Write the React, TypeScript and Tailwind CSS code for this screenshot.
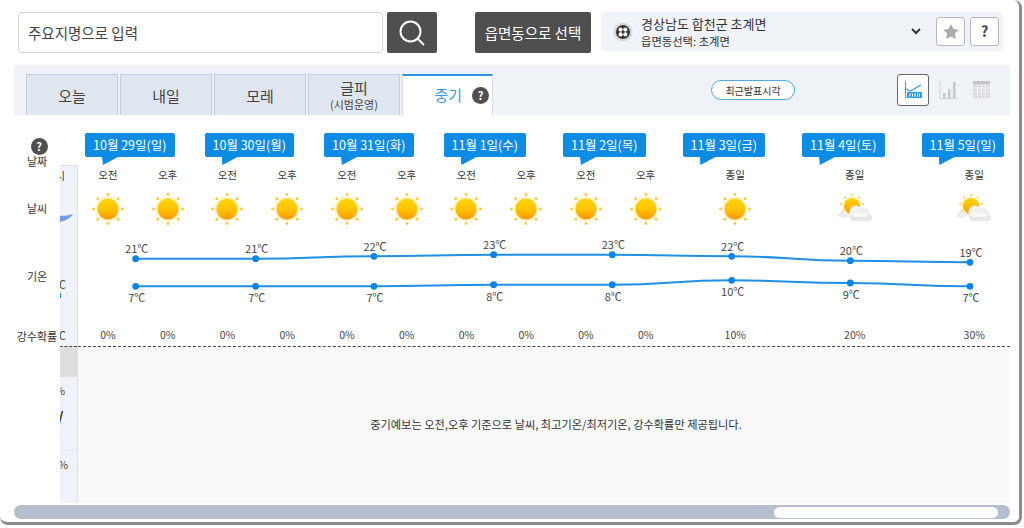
import { useId } from "react";

const dates = [
  "10월 29일(일)",
  "10월 30일(월)",
  "10월 31일(화)",
  "11월 1일(수)",
  "11월 2일(목)",
  "11월 3일(금)",
  "11월 4일(토)",
  "11월 5일(일)",
];

const slots = [
  { label: "오전", icon: "sun", rain: "0%" },
  { label: "오후", icon: "sun", rain: "0%" },
  { label: "오전", icon: "sun", rain: "0%" },
  { label: "오후", icon: "sun", rain: "0%" },
  { label: "오전", icon: "sun", rain: "0%" },
  { label: "오후", icon: "sun", rain: "0%" },
  { label: "오전", icon: "sun", rain: "0%" },
  { label: "오후", icon: "sun", rain: "0%" },
  { label: "오전", icon: "sun", rain: "0%" },
  { label: "오후", icon: "sun", rain: "0%" },
  { label: "종일", icon: "sun", rain: "10%", wide: true },
  { label: "종일", icon: "cloud", rain: "20%", wide: true },
  { label: "종일", icon: "cloud", rain: "30%", wide: true },
];

// x, y measured from the top left of the temperature band
const highs = [
  { x: 57.7, y: 30.7, t: "21℃" },
  { x: 177.7, y: 30.7, t: "21℃" },
  { x: 296, y: 28.3, t: "22℃" },
  { x: 415.7, y: 26.7, t: "23℃" },
  { x: 534.3, y: 26.7, t: "23℃" },
  { x: 653.7, y: 28.3, t: "22℃" },
  { x: 772.3, y: 32.7, t: "20℃" },
  { x: 892, y: 34.3, t: "19℃" },
];

const lows = [
  { x: 57.7, y: 58.3, t: "7℃" },
  { x: 177.7, y: 58.3, t: "7℃" },
  { x: 296, y: 58.3, t: "7℃" },
  { x: 415.7, y: 56.7, t: "8℃" },
  { x: 534.3, y: 56.7, t: "8℃" },
  { x: 653.7, y: 52.3, t: "10℃" },
  { x: 772.3, y: 55, t: "9℃" },
  { x: 892, y: 58.3, t: "7℃" },
];

function smoothPath(points: { x: number; y: number }[]) {
  return points
    .map((p, i) => {
      if (i === 0) return `M${p.x} ${p.y}`;
      const prev = points[i - 1];
      const mid = (prev.x + p.x) / 2;
      return `C${mid} ${prev.y} ${mid} ${p.y} ${p.x} ${p.y}`;
    })
    .join(" ");
}

function SunIcon() {
  const id = useId();
  const rays = [0, 45, 90, 135, 180, 225, 270, 315];
  return (
    <svg width="32" height="32" viewBox="0 0 32 32">
      <defs>
        <linearGradient id={id} x1="0" y1="0" x2="0" y2="1">
          <stop offset="0" stopColor="#ffd60a" />
          <stop offset="0.5" stopColor="#ffc400" />
          <stop offset="1" stopColor="#ff9800" />
        </linearGradient>
      </defs>
      <circle cx="16" cy="16" r="12.5" fill="#fff3c4" />
      <circle cx="16" cy="16" r="10.5" fill={`url(#${id})`} />
      {rays.map((r) => (
        <circle
          key={r}
          cx={16 + 14.5 * Math.cos((r * Math.PI) / 180)}
          cy={16 + 14.5 * Math.sin((r * Math.PI) / 180)}
          r="1.4"
          fill="#ffc933"
        />
      ))}
    </svg>
  );
}

function CloudSunIcon() {
  const id = useId();
  const rays = [150, 190, 230, 270, 310, 350];
  return (
    <svg width="36" height="30" viewBox="0 0 36 30">
      <defs>
        <linearGradient id={id} x1="0" y1="0" x2="0" y2="1">
          <stop offset="0" stopColor="#ffd60a" />
          <stop offset="1" stopColor="#ff9f00" />
        </linearGradient>
      </defs>
      <circle cx="15" cy="12" r="9.5" fill="#fff3c4" />
      <circle cx="15" cy="12" r="8" fill={`url(#${id})`} />
      {rays.map((r) => (
        <circle
          key={r}
          cx={15 + 11 * Math.cos((r * Math.PI) / 180)}
          cy={12 + 11 * Math.sin((r * Math.PI) / 180)}
          r="1"
          fill="#ffc933"
        />
      ))}
      <ellipse cx="6" cy="21" rx="5.5" ry="3" fill="#eceef2" />
      <circle cx="19" cy="18" r="6.5" fill="#f1f2f5" />
      <circle cx="27" cy="20" r="6" fill="#eceef2" />
      <rect x="13" y="20" width="22" height="7" rx="3.5" fill="#e4e6eb" />
      <rect x="15" y="19" width="16" height="4" rx="2" fill="#f7f8fa" />
    </svg>
  );
}

function ChartModeIcon() {
  return (
    <svg width="17" height="17" viewBox="0 0 17 17" fill="none">
      <path d="M0.5 0v17h16.5" stroke="#3aa0e8" strokeWidth="1" />
      <path d="M1 8l4 2 4-2 7-4" stroke="#2f9be6" strokeWidth="1.2" />
      <rect x="2" y="11" width="15" height="6" fill="#35a0e8" />
      <path d="M5 12.5v3M7.5 12.5v3M10 12.5v3M12.5 12.5v3M14.5 12.5v3" stroke="#ffffff" strokeWidth="1" />
    </svg>
  );
}

function BarModeIcon() {
  return (
    <svg width="18" height="18" viewBox="0 0 18 18" fill="none">
      <path d="M1 0v17.5h17" stroke="#cfd2d6" strokeWidth="1" />
      <rect x="4" y="12" width="2.5" height="5" fill="#c5c8cc" />
      <rect x="9" y="8" width="2.5" height="9" fill="#c5c8cc" />
      <rect x="14" y="1" width="2.5" height="16" fill="#c5c8cc" />
    </svg>
  );
}

function TableModeIcon() {
  return (
    <svg width="17" height="17" viewBox="0 0 17 17" fill="none">
      <rect x="0" y="0" width="17" height="17" fill="#d9dbde" />
      <rect x="0" y="0" width="17" height="3" fill="#c4c6ca" />
      <path d="M0 7h17M0 11h17M4.5 3v14M8.5 3v14M12.5 3v14" stroke="#f2f3f5" strokeWidth="1" />
    </svg>
  );
}

function Tab({ title, sub }: { title: string; sub?: string }) {
  return (
    <div className="w-[92px] h-[41px] flex flex-col items-center justify-center bg-[#e0e6f0] border border-b-0 border-[#bfd0e6] text-[#444]">
      <span className="text-[15px] leading-[19px]">{title}</span>
      {sub && <span className="text-[11px] leading-[15px]">{sub}</span>}
    </div>
  );
}

export default function App() {
  return (
    <div className="w-[1024px] h-[528px] bg-white overflow-hidden font-['Noto_Sans_CJK_KR','Noto_Sans',sans-serif] text-[#333]">
      <div className="w-[1022px] h-[525px] border-r-[3px] border-b-[3px] border-[#8c8c8c] rounded-br-[8px] rounded-tr-[8px] rounded-bl-[8px]">
        {/* search row */}
        <header className="flex items-start pt-3 pl-[18px]">
          <div className="w-[365px] h-[41px] flex items-center pl-[9px] bg-white border border-[#d3d6dc] rounded-[4px] text-[14.5px] text-[#444]">
            주요지명으로 입력
          </div>
          <button className="ml-1 w-[50px] h-[41px] flex items-center justify-center bg-[#4f4f4f] rounded-[2px]">
            <svg width="28" height="28" viewBox="0 0 28 28" fill="none" stroke="#ffffff">
              <circle cx="12.5" cy="12.5" r="10" strokeWidth="2" />
              <path d="M20 20l6 6" strokeWidth="2" />
            </svg>
          </button>
          <button className="ml-[38px] w-[116px] h-[41px] bg-[#4f4f4f] rounded-[2px] text-white text-[14.5px]">
            읍면동으로 선택
          </button>
          <div className="ml-[10px] w-[402px] h-[39px] flex items-center pl-3 pr-1 bg-[#f0f4f9] rounded-[4px]">
            <svg width="20" height="20" viewBox="0 0 20 20">
              <circle cx="10" cy="10" r="9.5" fill="#d5d9e0" />
              <circle cx="10" cy="10" r="7" fill="#333333" />
              <circle cx="7.6" cy="7.6" r="2.1" fill="#ffffff" />
              <circle cx="12.4" cy="7.6" r="2.1" fill="#ffffff" />
              <circle cx="7.6" cy="12.4" r="2.1" fill="#ffffff" />
              <circle cx="12.4" cy="12.4" r="2.1" fill="#ffffff" />
            </svg>
            <div className="ml-[8px] flex flex-col text-[#333]">
              <span className="text-[13px] leading-[18px]">경상남도 합천군 초계면</span>
              <span className="text-[11.3px] leading-[16px]">읍면동선택: 초계면</span>
            </div>
            <svg className="ml-auto" width="10" height="7" viewBox="0 0 10 7" fill="none" stroke="#333333" strokeWidth="2">
              <path d="M1 1l4 4 4-4" />
            </svg>
            <button className="ml-[15px] w-[29px] h-[29px] flex items-center justify-center bg-white border border-[#b5b8bd] rounded-[3px]">
              <svg width="16" height="15" viewBox="0 0 24 23">
                <path d="M12 0l3.7 7.6 8.3 1.2-6 5.8 1.4 8.4L12 19l-7.4 4L6 14.6 0 8.8l8.3-1.2z" fill="#a8abb0" />
              </svg>
            </button>
            <button className="ml-[5px] w-[29px] h-[29px] flex items-center justify-center bg-white border border-[#b5b8bd] rounded-[3px] text-[15px] font-bold text-[#444]">
              ?
            </button>
          </div>
        </header>

        {/* tabs */}
        <nav className="mt-3 ml-[14px] w-[996px] h-[50px] flex items-end pl-3 pr-[20px] bg-[#eff3f8]">
          <div className="flex gap-[2px]">
            <Tab title="오늘" />
            <Tab title="내일" />
            <Tab title="모레" />
            <Tab title="글피" sub="(시범운영)" />
            <div className="w-[91px] h-[41px] flex items-center justify-end gap-[10px] pr-[3px] bg-white border-x border-[#cfe0f0] border-t-2 border-t-[#2a96e6] text-[15px] text-[#3a9ae0]">
              중기
              <span className="w-[17px] h-[17px] flex items-center justify-center rounded-full bg-[#4f4f4f] text-white text-[11px] font-bold">
                ?
              </span>
            </div>
          </div>
          <div className="self-center ml-[218px] w-[84px] h-5 flex items-center justify-center bg-white border border-[#4fa9ea] rounded-full text-[10px] text-[#333]">
            최근발표시각
          </div>
          <div className="self-center ml-auto flex items-center -mt-[1px]">
            <span className="w-8 h-8 flex items-center justify-center bg-white border border-[#666] rounded-[3px]">
              <ChartModeIcon />
            </span>
            <span className="ml-[10px] flex">
              <BarModeIcon />
            </span>
            <span className="ml-[16px] flex">
              <TableModeIcon />
            </span>
          </div>
        </nav>

        {/* forecast */}
        <section className="flex w-[1010px] h-[388px]">
          <div className="w-[60px] shrink-0 flex flex-col items-center pl-[14px] pt-[23px] text-[11px] leading-[15px] text-[#333]">
            <span className="ml-1 z-10 w-[17px] h-[17px] flex items-center justify-center rounded-full bg-[#4f4f4f] text-white text-[11px] font-bold">
              ?
            </span>
            <span className="-mt-[1px]">날짜</span>
            <span className="mt-[32px]">날씨</span>
            <span className="mt-[53px]">기온</span>
            <span className="mt-[45px] whitespace-nowrap">강수확률</span>
          </div>

          {/* frozen column scrolled almost out of view */}
          <div className="w-[18px] shrink-0 mt-[50px] flex flex-col overflow-hidden bg-[#f0f4fa] border-t border-r border-[#dce1ea] text-[11px] text-[#444]">
            <div className="h-[19px] leading-[19px] -ml-[5px]">시</div>
            <div className="h-[43px] pt-[29px]">
              <svg className="block" width="13" height="8" viewBox="0 0 13 8">
                <path d="M0 2Q7 2 13 0Q9 6 0 8z" fill="#6f9fe6" />
              </svg>
            </div>
            <div className="h-[92px] pt-[48px] leading-4">
              <div className="-ml-[5px]">℃</div>
              <div className="ml-[-1px] mt-px w-[2px] h-[5px] bg-[#1e90e6]" />
            </div>
            <div className="h-[27px] border-b border-dashed border-[#444] leading-[30px] -ml-[5px] pl-[5px]">
              <div className="-ml-[5px]">℃</div>
            </div>
            <div className="h-[30px] bg-[#dedede]" />
            <div className="h-[74px] flex flex-col pt-[5px] leading-4 border-b border-[#e3e6ec]">
              <div className="-ml-[5px]">%</div>
              <div className="mt-[10px] h-4 text-[14px] font-bold text-[#222] -ml-[2px]">/</div>
              <div className="mt-[5px] -ml-[3px]">)</div>
            </div>
            <div className="flex-1 pt-[5px] leading-4 -ml-[2px]">%</div>
          </div>

          <div className="w-[932px] shrink-0 overflow-hidden flex flex-col">
            <div className="grid grid-cols-[repeat(8,119.5px)] h-[50px] pt-[18px]">
              {dates.map((d) => (
                <div key={d} className="pl-[7px] flex items-start">
                  <span className="relative h-6 leading-6 px-2 bg-[#0d8ce5] rounded-[2px] text-white text-[12.5px] whitespace-nowrap">
                    {d}
                    <span className="absolute left-[17px] top-6 w-4 h-2 bg-[#0d8ce5] [clip-path:polygon(0_0,100%_0,6%_100%)]" />
                  </span>
                </div>
              ))}
            </div>

            <div className="grid grid-cols-[repeat(16,59.75px)] h-[20px] items-center text-center text-[10.5px] leading-[18px] text-[#333]">
              {slots.map((s, i) => (
                <span key={i} className={s.wide ? "col-span-2" : ""}>
                  {s.label}
                </span>
              ))}
            </div>

            <div className="grid grid-cols-[repeat(16,59.75px)] h-[43px] pt-[4px] items-center justify-items-center">
              {slots.map((s, i) => (
                <div key={i} className={s.wide ? "col-span-2 flex" : "flex"}>
                  {s.icon === "sun" ? <SunIcon /> : <CloudSunIcon />}
                </div>
              ))}
            </div>

            <div className="relative h-[92px] text-[11px] leading-[15px] text-[#444]">
              <svg className="absolute inset-0" width="932" height="92" fill="none">
                <path d={smoothPath(highs)} stroke="#1e90e6" strokeWidth="2" />
                <path d={smoothPath(lows)} stroke="#1e90e6" strokeWidth="2" />
                {[...highs, ...lows].map((p, i) => (
                  <circle key={i} cx={p.x} cy={p.y} r="3.4" fill="#0a84e6" />
                ))}
              </svg>
              {highs.map((p, i) => (
                <span
                  key={i}
                  className="absolute -translate-x-1/2"
                  style={{ left: p.x + 1, top: p.y - 17.5 }}
                >
                  {p.t}
                </span>
              ))}
              {lows.map((p, i) => (
                <span
                  key={i}
                  className="absolute -translate-x-1/2"
                  style={{ left: p.x + 1, top: p.y + 4 }}
                >
                  {p.t}
                </span>
              ))}
            </div>

            <div className="grid grid-cols-[repeat(16,59.75px)] h-[27px] pt-[3px] items-center text-center text-[10.5px] text-[#444] border-b border-dashed border-[#444]">
              {slots.map((s, i) => (
                <span key={i} className={s.wide ? "col-span-2" : ""}>
                  {s.rain}
                </span>
              ))}
            </div>

            <div className="flex-1 flex items-center justify-center pl-[24px] pb-[1px] bg-[#f9f9f9] text-[11.2px] text-[#333]">
              중기예보는 오전,오후 기준으로 날씨, 최고기온/최저기온, 강수확률만 제공됩니다.
            </div>
          </div>
        </section>

        {/* horizontal scrollbar */}
        <div className="mt-[2px] ml-[14px] w-[996px] h-[14px] flex items-center justify-end pr-3 bg-[#b6bfcf] rounded-full">
          <div className="w-[224px] h-[11px] bg-white rounded-full" />
        </div>
      </div>
    </div>
  );
}
